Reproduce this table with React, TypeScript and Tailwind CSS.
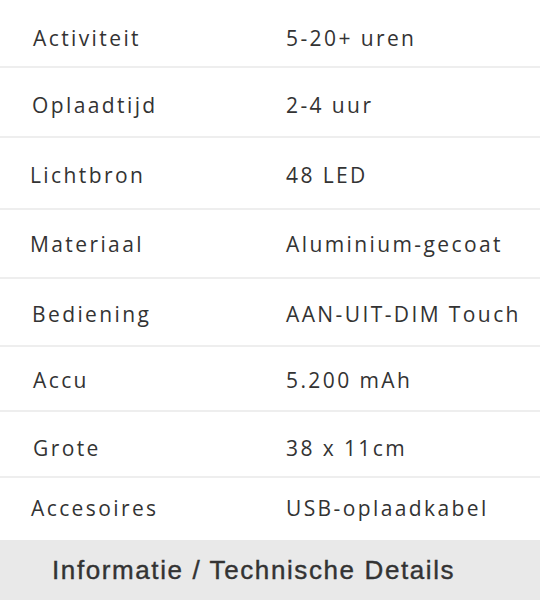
import React from 'react';

interface SpecRow {
  label: string;
  value: string;
  height: string;
  labelPad: string;
  topPad: string;
}

const ROWS: SpecRow[] = [
  { label: 'Activiteit', value: '5-20+ uren', height: 'h-[68px]', labelPad: 'pl-[33px]', topPad: 'pt-[12px]' },
  { label: 'Oplaadtijd', value: '2-4 uur', height: 'h-[70px]', labelPad: 'pl-[32px]', topPad: 'pt-[8px]' },
  { label: 'Lichtbron', value: '48 LED', height: 'h-[72px]', labelPad: 'pl-[30px]', topPad: 'pt-[6px]' },
  { label: 'Materiaal', value: 'Aluminium-gecoat', height: 'h-[69px]', labelPad: 'pl-[30px]', topPad: 'pt-[3px]' },
  { label: 'Bediening', value: 'AAN-UIT-DIM Touch', height: 'h-[68px]', labelPad: 'pl-[32px]', topPad: 'pt-[6px]' },
  { label: 'Accu', value: '5.200 mAh', height: 'h-[65px]', labelPad: 'pl-[33px]', topPad: 'pt-[5px]' },
  { label: 'Grote', value: '38 x 11cm', height: 'h-[66px]', labelPad: 'pl-[33px]', topPad: 'pt-[10px]' },
  { label: 'Accesoires', value: 'USB-oplaadkabel', height: 'h-[62px]', labelPad: 'pl-[31px]', topPad: 'pt-0' },
];

export default function App() {
  return (
    <div className="w-[540px] h-[600px] bg-white overflow-hidden flex flex-col">
      {/* Spec table */}
      <div className="flex flex-col">
        {ROWS.map((row, i) => (
          <div
            key={row.label}
            className={`grid grid-cols-[286px_1fr] items-center ${row.topPad} ${row.height} ${
              i < ROWS.length - 1 ? 'border-b-2 border-[#eeeeee]' : ''
            }`}
          >
            <span
              className={`${row.labelPad} text-[21px] tracking-[2.4px] text-[#333333] font-['Open_Sans',sans-serif]`}
            >
              {row.label}
            </span>
            <span className="text-[21px] tracking-[2.4px] text-[#333333] font-['Open_Sans',sans-serif]">
              {row.value}
            </span>
          </div>
        ))}
      </div>

      {/* Footer bar */}
      <div className="h-[60px] bg-[#e9e9e9] flex items-center pl-[52px]">
        <span className="text-[26px] tracking-[1.6px] text-[#333333] [-webkit-text-stroke:0.4px_#333333] font-['Liberation_Sans',Arial,sans-serif]">
          Informatie / Technische Details
        </span>
      </div>
    </div>
  );
}
